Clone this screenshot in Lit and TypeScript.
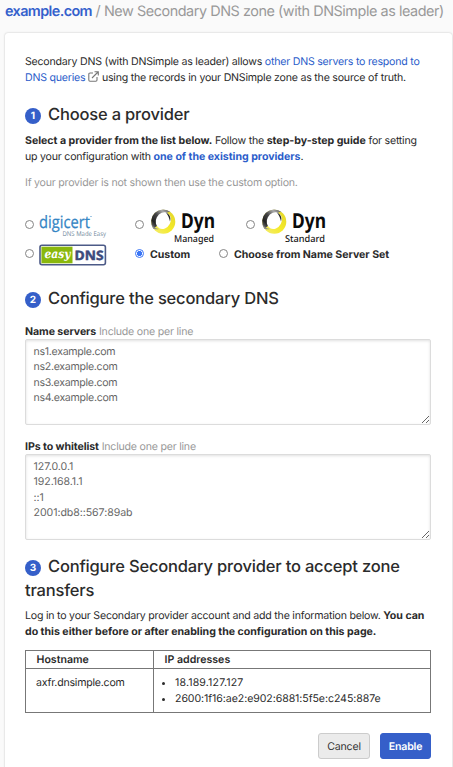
import { LitElement, html, css } from "lit";
import { customElement, property } from "lit/decorators.js";

@customElement("dyn-logo")
class DynLogo extends LitElement {
  @property() tier = "";
  static styles = css`
    :host { display: block; width: 66px; height: 36px; }
    svg { display: block; overflow: visible; }
    .name { font: 700 20.500px "Noto Sans", sans-serif; fill: #0b0b0b; }
    .tier { font: 500 9.5px "Noto Sans", sans-serif; fill: #161616; }
  `;
  render() {
    return html`<svg width="66" height="36" viewBox="0 0 66 36">
      <defs>
        <linearGradient id="dark" x1="0" y1="1" x2="1" y2="0">
          <stop offset="0" stop-color="#8a8a8a" /><stop offset="0.25" stop-color="#222" /><stop offset="0.5" stop-color="#444" /><stop offset="0.75" stop-color="#aaa" /><stop offset="1" stop-color="#444" />
        </linearGradient>
        <linearGradient id="sun" x1="0" y1="1" x2="1" y2="0">
          <stop offset="0" stop-color="#f2ec7a" /><stop offset="0.5" stop-color="#f5ea28" /><stop offset="1" stop-color="#e0d32e" />
        </linearGradient>
      </defs>
      <circle cx="13.300" cy="13.700" r="12" fill="url(#sun)" />
      <path fill="url(#dark)" d="M3.500 20.700A12 12 0 0 1 20.800 4.300Q16 2 13 13Z" />
      <ellipse cx="13.300" cy="12.600" rx="7.300" ry="8.700" fill="#fff" transform="rotate(28 13.300 12.600)" />
      <path fill="#242424" d="M16 4.500C19.500 6 21.200 9.500 20 13.500C19.200 10 18.200 7.500 16 4.500Z" />
      <path fill="#888" d="M3.500 20.700Q2.300 19 1.900 17Q4.300 20.500 8.800 21Q5.800 21.700 3.500 20.700Z" />
      <text class="name" x="31" y="20" textLength="34" lengthAdjust="spacingAndGlyphs">Dyn</text>
      <text class="tier" x="24" y="33.500" textLength="40" lengthAdjust="spacingAndGlyphs">${this.tier}</text>
    </svg>`;
  }
}

@customElement("app-root")
class AppRoot extends LitElement {
  static styles = css`
    :host {
      display: block; box-sizing: border-box; width: 453px; height: 767px; overflow: hidden;
      background: #fafafa; color: #2b2b2b; font: 400 10.600px/16px Inter, sans-serif; letter-spacing: -.22px; text-rendering: geometricPrecision;
    }
    * { box-sizing: border-box; }
    .title { height: 33px; margin: 0; padding-left: 5px; font-size: 14.400px; line-height: 24px; font-weight: 400; color: #999; white-space: nowrap; letter-spacing: -.44px; }
    .title b { color: #3460cc; font-weight: 600; letter-spacing: -.6px; }
    .card { width: 447px; height: 740px; margin-left: 5px; padding: 20px; background: #fff; border-radius: 3px; box-shadow: 0 0 2px rgba(0,0,0,.25); }
    p { margin: 0 0 -1px; padding-top: 1px; }
    .line { display: block; white-space: nowrap; }
    a { color: #2b5dca; text-decoration: none; }
    b { font-weight: 700; letter-spacing: -.02px; }
    .ext { display: inline-block; width: 11px; height: 11px; vertical-align: -1px; margin: 0 2.500px 0 3px; }
    h2 { margin: 0; font-size: 16.500px; line-height: 24px; font-weight: 500; white-space: nowrap; letter-spacing: -.18px; }
    .num { display: inline-block; width: 16px; height: 16px; border-radius: 8px; margin-right: 7px; background: #355fc9; color: #fff; font-size: 10px; line-height: 16px; font-weight: 700; text-align: center; vertical-align: 1.500px; letter-spacing: 0; }
    .gray { color: #999; }
    .one { margin-top: 17px; }
    .intro { margin-top: 6px; }
    .hint { margin-top: 10px; }
    .row { display: flex; align-items: center; }
    .logos { margin-top: 18px; height: 36px; }
    .logos input { margin-top: -4px; }
    .second { height: 21px; margin-top: 0; }
    .second input { margin-top: -2px; }
    .opt { display: flex; align-items: center; font-weight: 700; white-space: nowrap; letter-spacing: -.03px; }
    .opt.w1 { width: 110px; }
    .opt.w2 { width: 84px; }
    .opt.w3 { width: 111px; }
    input { appearance: none; flex: none; width: 9px; height: 9px; margin: 0 6px 0 0; border: 1px solid #858585; border-radius: 50%; background: #fff; }
    input:checked { border-color: #3b76f6; background: radial-gradient(circle, #3b76f6 2.300px, #fff 2.900px); }
    svg { display: block; overflow: visible; letter-spacing: 0; }
    dyn-logo { letter-spacing: 0; }
    .digi { font: 500 17px "Open Sans", sans-serif; fill: #3485c4; stroke: #3485c4; stroke-width: .25px; }
    .made { font: 400 6.500px "Open Sans", sans-serif; fill: #72899d; }
    .easy { font: italic 700 12px "DejaVu Serif", serif; fill: #fff; }
    .dns { font: 700 13px "Open Sans", sans-serif; fill: #3c4a7c; stroke: #3c4a7c; stroke-width: .5px; }
    .two { margin-top: 21px; }
    .label { margin-top: 13px; height: 16px; padding-top: 1px; white-space: nowrap; }
    .label b { letter-spacing: -.08px; }
    textarea { display: block; width: 406px; height: 86px; margin: 0; padding: 4px 7.500px; border: 1px solid #dcdcdc; border-radius: 2px; outline: 0; resize: vertical; background: #fff; color: #666; font: 400 10.600px/15.400px Inter, sans-serif; letter-spacing: -.29px; text-rendering: geometricPrecision; box-shadow: inset 0 1px 3px rgba(0,0,0,.12); overflow: hidden; }
    textarea.addresses { letter-spacing: -.06px; }
    .three { margin-top: 14px; }
    .login { margin-top: 5px; }
    table { width: 406px; margin-top: 12px; border-collapse: collapse; table-layout: fixed; }
    .login + table { margin-top: 11px; }
    th, td { border: 1px solid #777; text-align: left; vertical-align: top; }
    th { height: 18px; padding: 0 10.500px; line-height: 17px; font-weight: 600; letter-spacing: 0; }
    td { height: 44px; padding: 6px 10px 4px; }
    .host { width: 128px; }
    ul { margin: 0; padding-left: 11px; list-style: none; }
    li { display: flex; align-items: center; white-space: nowrap; letter-spacing: -.08px; }
    li:first-child { letter-spacing: .15px; }
    li::before { content: ""; width: 3px; height: 3px; margin: 0 10px 0 -13px; border-radius: 50%; background: #2b2b2b; }
    .actions { display: flex; justify-content: flex-end; gap: 10px; margin: 20px 1px 0 0; }
    button { height: 26px; padding: 1px 0 0; border: 1px solid #ccc; border-radius: 3px; background: #ebebeb; color: #333; font: 400 10.600px/16px Inter, sans-serif; letter-spacing: -.2px; text-rendering: geometricPrecision; width: 52px; }
    button.go { width: 51px; border-color: #355fc9; background: #355fc9; color: #fff; font-weight: 600; }
  `;
  render() {
    return html`
      <h1 class="title"><b>example.com</b> / New Secondary DNS zone (with DNSimple as leader)</h1>
      <main class="card">
        <p>
          <span class="line">Secondary DNS (with DNSimple as leader) allows <a>other DNS servers to respond to</a></span>
          <span class="line"><a>DNS queries</a><svg class="ext" viewBox="0 0 11 11" fill="none" stroke="#777" stroke-width="1.100"><path d="M5 2H2Q.8 2 .8 3.200V9Q.8 10.200 2 10.200H7.800Q9 10.200 9 9V6M4 7L10 1M6.500 .7H10.300V4.500" /></svg>using the records in your DNSimple zone as the source of truth.</span>
        </p>
        <h2 class="one"><span class="num">1</span>Choose a provider</h2>
        <p class="intro">
          <span class="line"><b>Select a provider from the list below.</b> Follow the <b>step-by-step guide</b> for setting</span>
          <span class="line">up your configuration with <a><b>one of the existing providers</b></a>.</span>
        </p>
        <p class="gray hint">If your provider is not shown then use the custom option.</p>
        <div class="row logos">
          <label class="opt w1"><input type="radio" name="provider" />
            <svg width="68" height="28" viewBox="0 0 68 28">
              <text class="digi" x="-1" y="16" textLength="51" lengthAdjust="spacingAndGlyphs">digicert</text>
              <circle cx="51" cy="4.500" r=".6" fill="#3485c4" />
              <text class="made" x="22.500" y="24" textLength="43.500" lengthAdjust="spacingAndGlyphs">DNS Made Easy</text>
            </svg>
          </label>
          <label class="opt w3"><input type="radio" name="provider" /><dyn-logo tier="Managed"></dyn-logo></label>
          <label class="opt"><input type="radio" name="provider" /><dyn-logo tier="Standard"></dyn-logo></label>
        </div>
        <div class="row second">
          <label class="opt w1"><input type="radio" name="provider" />
            <svg width="68" height="22" viewBox="0 0 68 22">
              <rect x="0" y="1.300" width="65.400" height="19.400" rx="2" fill="#fff" stroke="#4c5a87" stroke-width="1.600" />
              <path d="M1.400 2.700H32.500V19.300H1.400Z" fill="#8ab80c" />
              <text class="easy" x="4.500" y="14" textLength="26" lengthAdjust="spacingAndGlyphs">easy</text>
              <text class="dns" x="34.500" y="16" textLength="29" lengthAdjust="spacingAndGlyphs">DNS</text>
            </svg>
          </label>
          <label class="opt w2"><input type="radio" name="provider" checked />Custom</label>
          <label class="opt"><input type="radio" name="provider" />Choose from Name Server Set</label>
        </div>
        <h2 class="two"><span class="num">2</span>Configure the secondary DNS</h2>
        <div class="label"><b>Name servers</b> <span class="gray">Include one per line</span></div>
        <textarea .value=${"ns1.example.com\nns2.example.com\nns3.example.com\nns4.example.com"}></textarea>
        <div class="label"><b>IPs to whitelist</b> <span class="gray">Include one per line</span></div>
        <textarea class="addresses" .value=${"127.0.0.1\n192.168.1.1\n::1\n2001:db8::567:89ab"}></textarea>
        <h2 class="three"><span class="num">3</span>Configure Secondary provider to accept zone<br />transfers</h2>
        <p class="login">
          <span class="line">Log in to your Secondary provider account and add the information below. <b>You can</b></span>
          <span class="line"><b>do this either before or after enabling the configuration on this page.</b></span>
        </p>
        <table>
          <tr><th class="host">Hostname</th><th>IP addresses</th></tr>
          <tr><td>axfr.dnsimple.com</td><td><ul><li>18.189.127.127</li><li>2600:1f16:ae2:e902:6881:5f5e:c245:887e</li></ul></td></tr>
        </table>
        <div class="actions"><button>Cancel</button><button class="go">Enable</button></div>
      </main>`;
  }
}
